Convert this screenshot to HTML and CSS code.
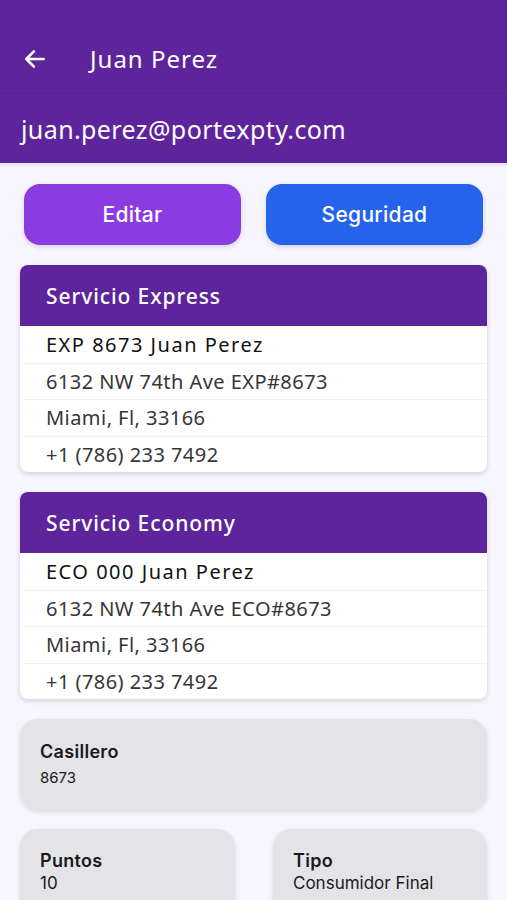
FILE: index.html
```html
<!DOCTYPE html>
<html lang="es">
<head>
    <meta charset="UTF-8">
    <meta name="viewport" content="width=device-width, initial-scale=1.0">
    <title>Juan Perez</title>
    <link rel="stylesheet" href="styles.css">
</head>
<body>
    <header class="header">
        <div class="topbar">
            <svg class="back" width="26" height="26" viewBox="0 0 24 24">
                <path d="M20 12H4M11 5l-7 7 7 7" fill="none" stroke="#fff" stroke-width="2.4" stroke-linecap="round" stroke-linejoin="round"/>
            </svg>
            <span class="title">Juan Perez</span>
        </div>
        <div class="email">juan.perez@portexpty.com</div>
    </header>

    <main class="content">
        <div class="actions">
            <button class="btn btn-edit">Editar</button>
            <button class="btn btn-security">Seguridad</button>
        </div>

        <section class="card">
            <div class="card-head">Servicio Express</div>
            <div class="row row-main">EXP 8673 Juan Perez</div>
            <div class="row">6132 NW 74th Ave EXP#8673</div>
            <div class="row">Miami, Fl, 33166</div>
            <div class="row">+1 (786) 233 7492</div>
        </section>

        <section class="card">
            <div class="card-head">Servicio Economy</div>
            <div class="row row-main">ECO 000 Juan Perez</div>
            <div class="row">6132 NW 74th Ave ECO#8673</div>
            <div class="row">Miami, Fl, 33166</div>
            <div class="row">+1 (786) 233 7492</div>
        </section>

        <div class="info info-wide">
            <div class="info-label">Casillero</div>
            <div class="info-value">8673</div>
        </div>

        <div class="info-grid">
            <div class="info">
                <div class="info-label">Puntos</div>
                <div class="info-value info-value-lg">10</div>
            </div>
            <div class="info">
                <div class="info-label">Tipo</div>
                <div class="info-value info-value-lg">Consumidor Final</div>
            </div>
        </div>
    </main>
</body>
</html>
```

FILE: styles.css
```css
body {
    margin: 0;
    background-color: #f7f5fd;
    font-family: "Noto Sans", sans-serif;
    height: 900px;
    overflow: hidden;
}

.header {
    background-color: #5d249c;
    color: #fff;
    border-bottom: 3px solid #ede4fb;
}

.topbar {
    height: 94px;
    display: flex;
    align-items: center;
    border-bottom: 1px solid #55208f;
    box-sizing: border-box;
    padding: 24px 0 0 22px;
}

.back {
    margin-right: 42px;
}

.title {
    font-size: 24px;
    letter-spacing: 1px;
}

.email {
    height: 69px;
    display: flex;
    align-items: center;
    padding-left: 21px;
    font-size: 25px;
    letter-spacing: 0.4px;
}

.content {
    padding: 18px 20px 0 20px;
}

.actions {
    display: flex;
    gap: 25px;
    padding: 0 4px;
    margin-bottom: 20px;
}

.btn {
    flex: 1;
    height: 61px;
    border: none;
    border-radius: 16px;
    color: #fff;
    font-family: "Inter", sans-serif;
    font-size: 21px;
    font-weight: 500;
    letter-spacing: 0.3px;
    box-shadow: 0 2px 5px rgba(0, 0, 0, 0.15);
}

.btn-edit {
    background-color: #8a3be2;
}

.btn-security {
    background-color: #2563eb;
}

.card {
    background-color: #fff;
    border-radius: 8px;
    overflow: hidden;
    box-shadow: 0 2px 5px rgba(0, 0, 0, 0.15);
    margin-bottom: 20px;
}

.card-head {
    background-color: #5d249c;
    color: #fff;
    height: 61px;
    display: flex;
    align-items: center;
    padding-left: 26px;
    font-size: 21px;
    font-weight: 500;
    letter-spacing: 0.9px;
}

.row {
    height: 36.5px;
    display: flex;
    align-items: center;
    margin-left: 4px;
    padding-left: 22px;
    font-size: 20px;
    letter-spacing: 0.45px;
    color: #363636;
    border-top: 1px solid #f1f1f3;
    box-sizing: border-box;
}

.row-main {
    border-top: none;
    color: #111;
    letter-spacing: 1.5px;
}

.info {
    background-color: #e4e4e8;
    border-radius: 18px;
    padding: 21px 20px;
    box-shadow: 0 2px 5px rgba(0, 0, 0, 0.12);
}

.info-wide {
    height: 91px;
    box-sizing: border-box;
    padding-top: 22px;
    margin-bottom: 19px;
}

.info-label {
    font-family: "Inter", sans-serif;
    font-size: 18px;
    font-weight: 600;
    letter-spacing: 0.3px;
    color: #1a1a1a;
}

.info-value {
    font-family: "Inter", sans-serif;
    font-size: 15px;
    color: #1a1a1a;
    margin-top: 6px;
}

.info-value-lg {
    font-size: 17px;
    margin-top: 2px;
}

.info-grid {
    display: grid;
    grid-template-columns: 215px 214px;
    justify-content: space-between;
}

.info-grid .info {
    height: 110px;
}
```
